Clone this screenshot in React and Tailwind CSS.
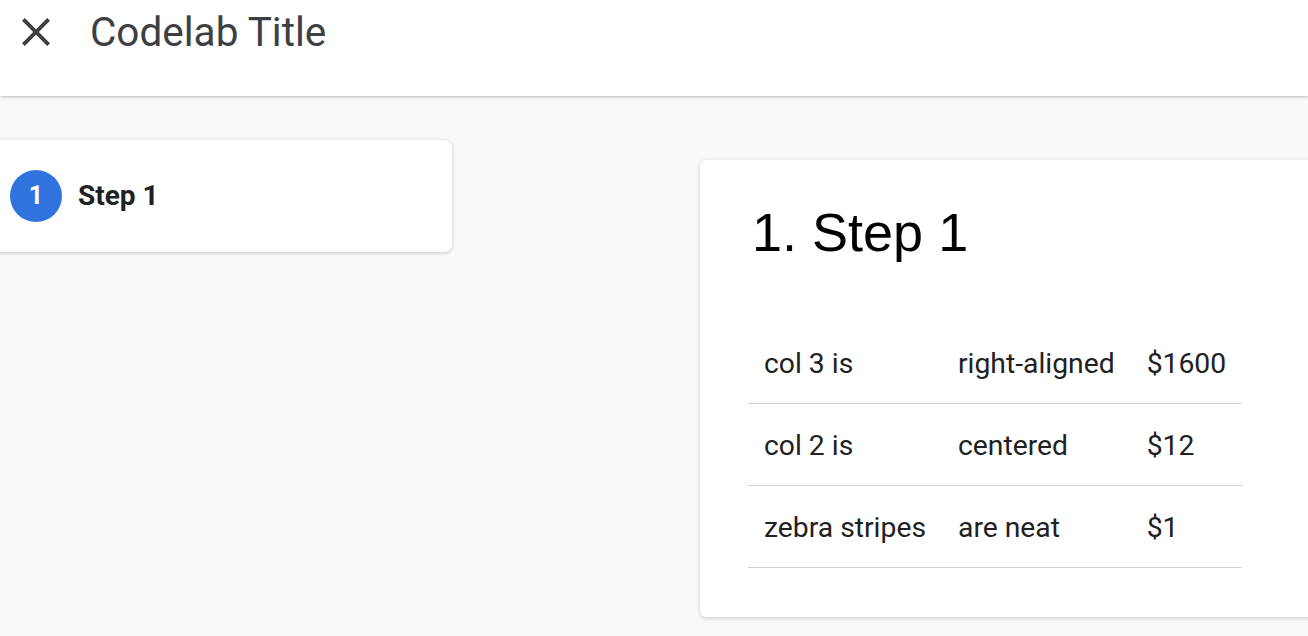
export default function App() {
	const rows = [
		["col 3 is", "right-aligned", "$1600"],
		["col 2 is", "centered", "$12"],
		["zebra stripes", "are neat", "$1"],
	];

	return (
		<div className="h-screen w-full overflow-hidden bg-[#f8f9fa] font-['Roboto',sans-serif]">
			{/* Top bar */}
			<header className="relative z-10 h-[96px] bg-white pl-[12px] pt-[8px] shadow-[0_1px_3px_rgba(0,0,0,0.25)]">
				<div className="flex h-[48px] items-center">
					<svg
						viewBox="0 0 24 24"
						className="h-[48px] w-[48px] shrink-0 fill-[#3c4043]"
					>
						<path d="M19 6.41L17.59 5 12 10.59 6.41 5 5 6.41 10.59 12 5 17.59 6.41 19 12 13.41 17.59 19 19 17.59 13.41 12z" />
					</svg>
					<h1 className="ml-[30px] text-[40.5px] leading-[48px] font-normal text-[#3c4043]">
						Codelab Title
					</h1>
				</div>
			</header>

			<div className="flex items-start">
				{/* Step list */}
				<div className="ml-[-20px] mt-[44px] flex h-[112px] w-[472px] shrink-0 items-center rounded-lg bg-white pl-[30px] shadow-[0_1px_4px_rgba(0,0,0,0.2)]">
					<div className="flex h-[52px] w-[52px] items-center justify-center rounded-full bg-[#3173de] text-[25px] font-bold text-white">
						1
					</div>
					<span className="ml-[16px] text-[28px] font-bold text-[#202124]">
						Step 1
					</span>
				</div>

				{/* Step content */}
				<div className="ml-[248px] mt-[64px] w-[680px] shrink-0 rounded-md bg-white pb-[49px] pl-[52px] pt-[40px] shadow-[0_1px_4px_rgba(0,0,0,0.2)]">
					<h2 className="font-['Liberation_Sans',Arial,sans-serif] text-[54px] leading-[65px] font-normal text-black">
						1. Step 1
					</h2>
					<table className="ml-[-4px] mt-[57px] border-collapse text-[28.3px] leading-[42px] text-[#212121]">
						<tbody>
							{rows.map((row) => (
								<tr key={row[0]} className="border-b border-[#d0d0d0]">
									{row.map((cell) => (
										<td key={cell} className="px-[16px] pb-[18px] pt-[21px] whitespace-nowrap">
											{cell}
										</td>
									))}
								</tr>
							))}
						</tbody>
					</table>
				</div>
			</div>
		</div>
	);
}
